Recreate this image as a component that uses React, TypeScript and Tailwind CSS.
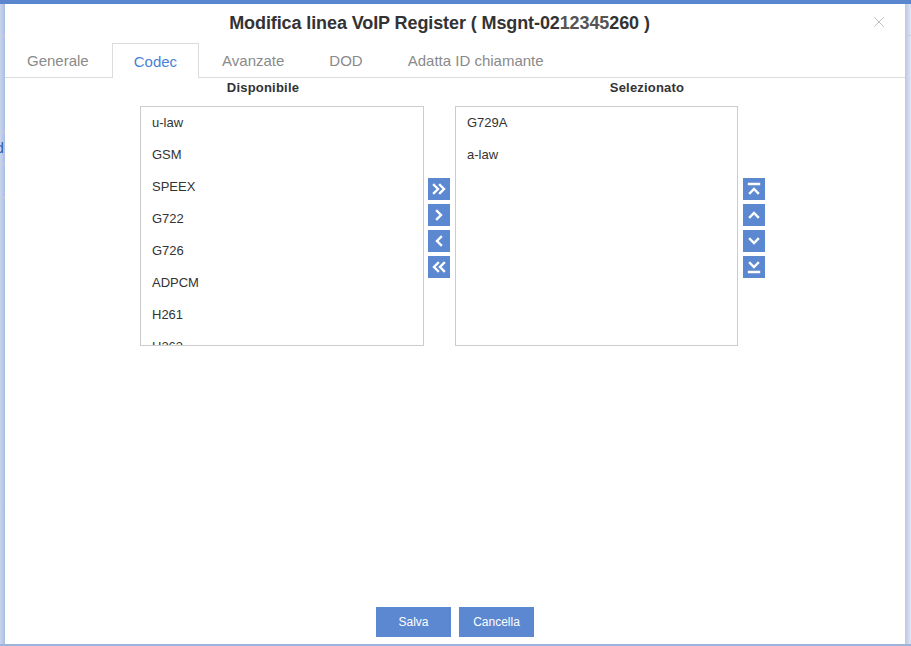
import { X } from 'lucide-react';

const available = ['u-law', 'GSM', 'SPEEX', 'G722', 'G726', 'ADPCM', 'H261', 'H263', 'H263P', 'H264'];
const selected = ['G729A', 'a-law'];
const tabs = ['Generale', 'Codec', 'Avanzate', 'DOD', 'Adatta ID chiamante'];

const Icon = ({ d }: { d: string }) => (
  <svg width="22" height="22" viewBox="0 0 22 22" fill="none" stroke="white" strokeWidth="2.4" strokeLinecap="square">
    <path d={d} />
  </svg>
);

const ArrowBtn = ({ d }: { d: string }) => (
  <button className="w-[22px] h-[22px] bg-[#5b88d1] flex items-center justify-center">
    <Icon d={d} />
  </button>
);

const App = () => {
  return (
    <div className="w-[911px] h-[646px] flex flex-col bg-[#e8eef8] overflow-hidden" style={{ fontFamily: 'Arial, "Liberation Sans", sans-serif' }}>
      <div className="h-[4px] bg-[#5a86cf]" />
      <div className="flex flex-1">
        {/* sfondo pagina a sinistra */}
        <div className="w-[5px] bg-gradient-to-r from-[#c9d5ec] to-[#a9bde3] relative overflow-hidden">
          <div className="h-[32px] border-b border-[#c8ccd4]" />
          <div className="h-[96px] border-b border-[#c8ccd4]" />
          <div className="h-[33px] border-b border-[#c8ccd4] text-[14px] text-[#2f5aa8] leading-[33px] -ml-[4px]">d</div>
          <div className="h-[33px] border-b border-[#c8ccd4]" />
        </div>

        {/* finestra */}
        <div className="w-[900px] bg-white flex flex-col">
          <div className="h-[39px] relative flex items-center justify-center pr-[31px] pb-[1px]">
            <h1 className="text-[18px] font-bold text-[#333] tracking-[-0.1px]">
              Modifica linea VoIP Register ( Msgnt-02<span className="text-[#555]">12345</span>260 )
            </h1>
            <X className="absolute right-[17px] top-[9px] text-[#a8a8a8]" size={18} strokeWidth={1} />
          </div>

          <div className="flex h-[35px] border-b border-[#dcdcdc]">
            {tabs.map(t => (
              <div
                key={t}
                className={`px-[21px] mr-[1px] pt-[2px] text-[15px] flex items-center ${
                  t === 'Codec'
                    ? 'text-[#4a7fd4] bg-white border border-b-0 border-[#dcdcdc] h-[35px] -mb-[1px]'
                    : 'text-[#8a8a8a] border border-transparent'
                }`}
              >
                {t}
              </div>
            ))}
          </div>

          <div className="flex h-[20px] items-center ml-[66px]">
            <div className="w-[384px] text-center text-[13px] font-bold text-[#333] tracking-[0.2px]">Disponibile</div>
            <div className="w-[384px] text-center text-[13px] font-bold text-[#333] tracking-[0.2px]">Selezionato</div>
          </div>

          <div className="flex mt-[8px] ml-[135px] items-start">
            <div className="w-[284px] h-[240px] border border-[#cccccc] overflow-hidden">
              {available.map(c => (
                <div key={c} className="h-[32px] leading-[31px] pl-[11px] text-[13px] text-[#333]">{c}</div>
              ))}
            </div>
            <div className="flex flex-col gap-[4px] mt-[72px] ml-[4px] mr-[5px]">
              <ArrowBtn d="M6 7l4 4-4 4M12 7l4 4-4 4" />
              <ArrowBtn d="M9 7l4 4-4 4" />
              <ArrowBtn d="M13 7l-4 4 4 4" />
              <ArrowBtn d="M10 7l-4 4 4 4M16 7l-4 4 4 4" />
            </div>
            <div className="w-[283px] h-[240px] border border-[#cccccc] overflow-hidden">
              {selected.map(c => (
                <div key={c} className="h-[32px] leading-[31px] pl-[11px] text-[13px] text-[#333]">{c}</div>
              ))}
            </div>
            <div className="flex flex-col gap-[4px] mt-[72px] ml-[5px]">
              <ArrowBtn d="M6 6h10M7 15l4-4 4 4" />
              <ArrowBtn d="M7 13l4-4 4 4" />
              <ArrowBtn d="M7 9l4 4 4-4" />
              <ArrowBtn d="M7 7l4 4 4-4M6 16h10" />
            </div>
          </div>

          <div className="flex-1" />
          <div className="flex justify-center gap-[8px] mb-[7px]">
            <button className="w-[75px] h-[30px] bg-[#5b88d1] text-white text-[12px]">Salva</button>
            <button className="w-[75px] h-[30px] bg-[#5b88d1] text-white text-[12px]">Cancella</button>
          </div>
        </div>

        <div className="w-[6px] bg-gradient-to-r from-[#b8c8e6] to-[#dfe6f4]">
          <div className="h-[32px] border-b border-[#c8ccd4]" />
        </div>
      </div>
      <div className="h-[2px] bg-[#9db4dc]" />
    </div>
  );
};

export default App;
